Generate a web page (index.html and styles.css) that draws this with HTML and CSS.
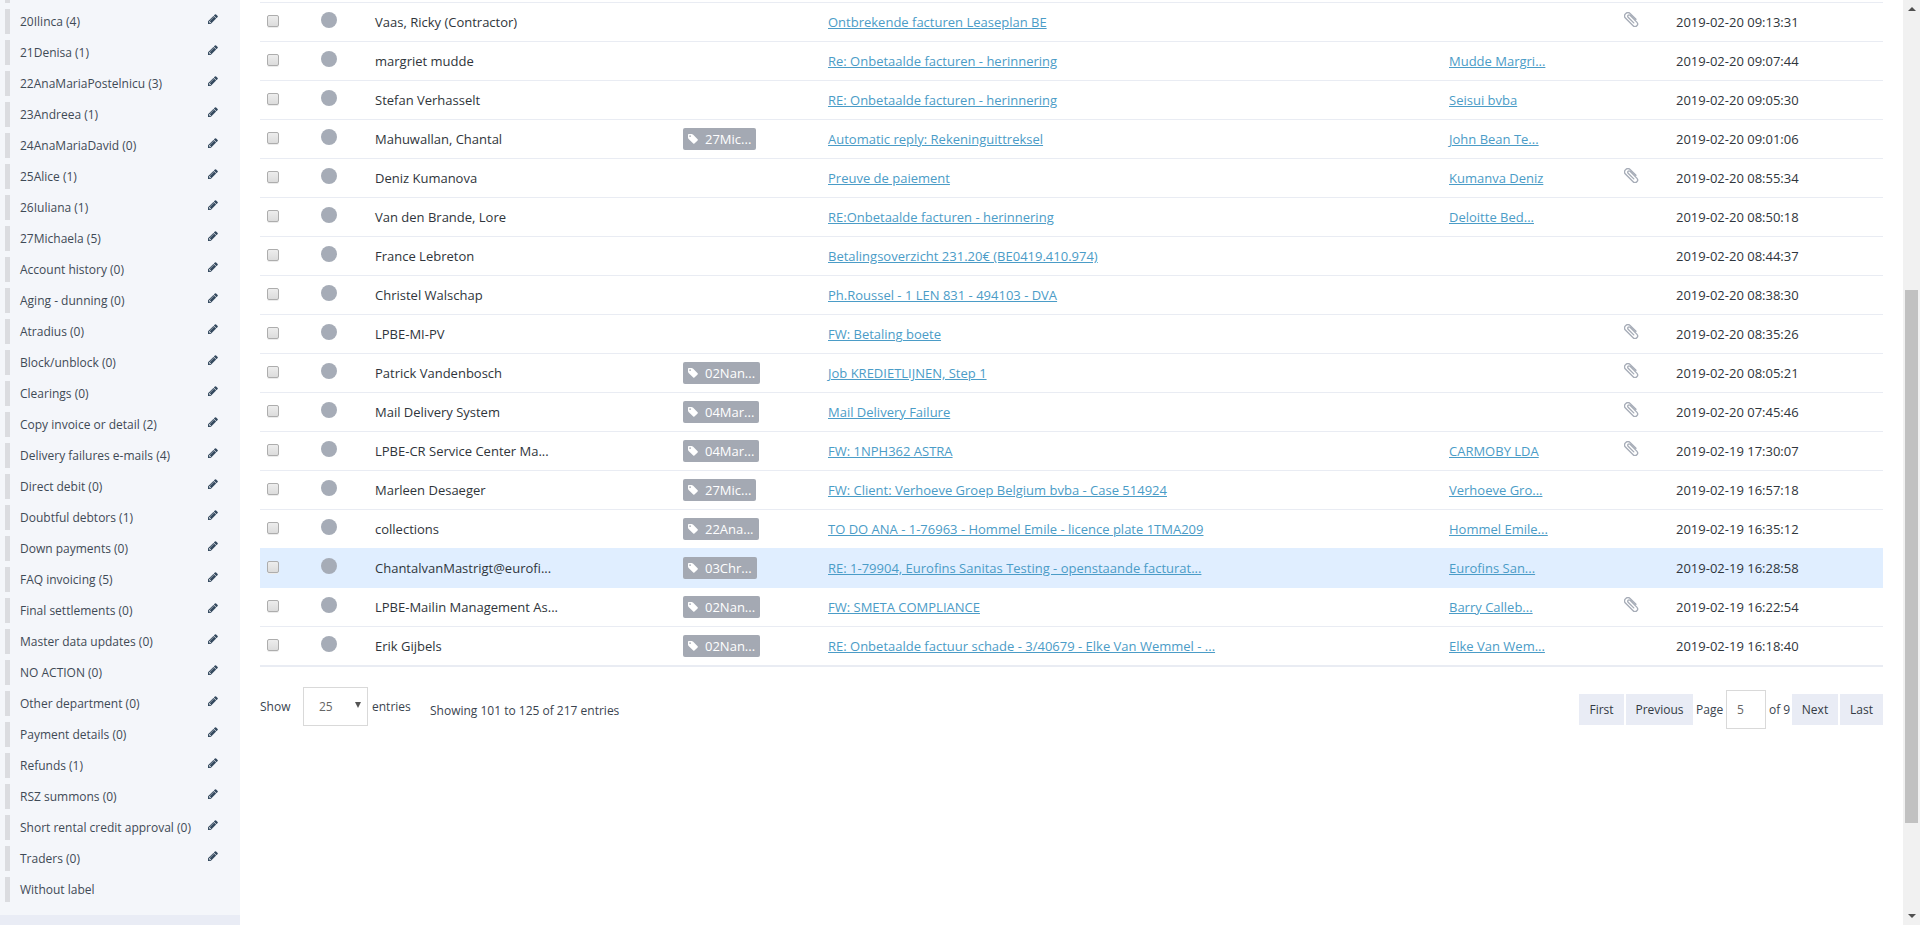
FILE: index.html
```
<!DOCTYPE html>
<html lang="en">
<head>
<meta charset="utf-8">
<title>Mailbox</title>
<link rel="stylesheet" href="styles.css">
</head>
<body>
<svg class="defs" aria-hidden="true">
  <symbol id="pencil" viewBox="0 0 1536 1536"><path d="M363 1408l91-91-235-235-91 91v107h128v128h107zM886 480q0-22-22-22-10 0-17 7l-542 542q-7 7-7 17 0 22 22 22 10 0 17-7l542-542q7-7 7-17zM832 288l416 416-832 832H0v-416zM1515 384q0 53-37 90l-166 166-416-416 166-165q36-38 90-38 53 0 91 38l235 234q37 39 37 91z"/></symbol>
  <symbol id="tag" viewBox="0 0 1536 1536"><path d="M448 320q0-53-37.500-90.500T320 192t-90.500 37.500T192 320t37.500 90.500T320 448t90.500-37.500T448 320zM1515 896q0 53-37 90l-491 492q-39 37-91 37-53 0-90-37L91 762q-38-37-64.500-101T0 544V128q0-52 38-90T128 0h416q53 0 117 26.500T763 91l715 714q37 39 37 91z"/></symbol>
  <symbol id="clip" viewBox="0 0 15 15"><path transform="translate(7.500 7.500) rotate(-45)" fill="none" stroke="currentColor" stroke-width="1.350" stroke-linecap="round" d="M3.300 3V-5A3.300 3.300 0 0 0-3.300-5V5.600A2.600 2.600 0 0 0 1.900 5.600V-4A1.350 1.350 0 0 0-.8-4V4"/></symbol>
</svg>
<div class="app">
  <aside class="sidebar">
    <ul class="labels" id="labels"></ul>
    <div class="sidebar-footer"></div>
  </aside>
  <main class="main">
    <div class="mails" id="mails"></div>
    <div class="footer">
      <div class="length">
        <span class="show">Show</span>
        <span class="select"><span>25</span><i class="caret"></i></span>
        <span class="entries">entries</span>
        <span class="info">Showing 101 to 125 of 217 entries</span>
      </div>
      <div class="pager">
        <span class="btn first">First</span><span class="btn prev">Previous</span><span class="page">Page</span><span class="input">5</span><span class="of">of 9</span><span class="btn next">Next</span><span class="btn last">Last</span>
      </div>
    </div>
  </main>
  <div class="scrollbar"><i class="up"></i><i class="thumb"></i><i class="down"></i></div>
</div>
<script src="app.js"></script>
</body>
</html>
```
FILE: styles.css
```
* { box-sizing: border-box; }
html, body { height: 100%; }
body { margin: 0; overflow: hidden; background: #fff; color: #2f353b; font: 13px/18px "Open Sans", sans-serif; }
.defs { position: absolute; width: 0; height: 0; }
.app { display: grid; grid-template-columns: 240px 1fr 17px; height: 925px; }

.sidebar { display: flex; flex-direction: column; justify-content: space-between; background: #f4f6fa; overflow: hidden; }
.labels { margin: 0; padding: 0 22px 0 5px; list-style: none; font-size: 12px; }
.label { display: flex; justify-content: space-between; height: 25px; margin-bottom: 6px; padding-left: 10px; border-left: 5px solid #dbdce0; line-height: 25px; color: #3f4a56; white-space: nowrap; }
.label.cut { height: 3px; }
.icon-pencil { flex: none; width: 10px; height: 10px; margin-top: 5px; fill: #34495e; }
.sidebar-footer { height: 10px; background: #e9ecf5; }

.main { padding: 2px 20px 0; }
.mails { border-bottom: 2px solid #e9ecf3; }
.mail { display: grid; grid-template-columns: 54px 54px 308px 145px 621px 175px 52px 1fr; align-items: start; height: 39px; padding-left: 7px; border-top: 1px solid #e9ecf3; }
.mail > span { padding-top: 10px; white-space: nowrap; }
.mail.hover, .mail.hover + .mail { border-color: #e0eeff; }
.mail.hover { background: #e0eeff; }
.mail .check { width: 12px; height: 12px; margin-top: 12px; padding: 0; border: 1px solid #adadad; border-radius: 2px; background: linear-gradient(#ededed, #dcdcdc); box-shadow: 0 1px 0 #ececec; }
.dot { width: 16px; height: 16px; margin-top: 9px; border-radius: 50%; background: #a6acb7; }
.mail .tagcell { padding-top: 8px; }
.tag { display: flex; align-items: center; width: fit-content; height: 22px; padding: 0 5px; border-radius: 2px; background: #a4a9b3; color: #fff; }
.icon-tag { width: 10px; height: 10px; margin-right: 7px; fill: #fff; }
a { color: #4b9cc7; text-decoration: underline; }
.mail .file { padding-top: 9px; color: #a6acb7; }
.icon-clip { display: block; width: 15px; height: 15px; }

.footer { display: flex; justify-content: space-between; padding-top: 20px; font-size: 12px; color: #3a444f; }
.length { display: flex; align-items: flex-start; }
.show { width: 43px; padding-top: 11px; }
.select { display: flex; justify-content: space-between; width: 65px; height: 39px; padding: 10px 6px 0 15px; border: 1px solid #d9d9d9; color: #666; }
.caret { height: 0; margin-top: 4px; border: 3px solid transparent; border-top: 6px solid #555; border-bottom: 0; }
.entries { margin-left: 4px; padding-top: 11px; width: 58px; }
.info { padding-top: 15px; }
.pager { display: flex; align-items: center; height: 39px; margin-top: 3px; }
.btn { height: 31px; line-height: 31px; background: #e9ecf5; text-align: center; color: #333a44; }
.first { width: 45px; margin-right: 2px; }
.prev { width: 67px; }
.page { width: 33px; padding-left: 3px; }
.input { width: 40px; height: 39px; padding: 10px; border: 1px solid #d9d9d9; color: #666; }
.of { width: 26px; padding-left: 3px; white-space: nowrap; }
.next { width: 46px; margin-right: 2px; }
.last { width: 43px; }

.scrollbar { display: flex; flex-direction: column; align-items: center; background: #f1f1f1; padding: 7px 0; }
.up, .down { border: 4px solid transparent; height: 0; }
.up { border-bottom-color: #505050; border-top: 0; }
.down { border-top-color: #505050; border-bottom: 0; margin-top: auto; }
.thumb { width: 13px; height: 533px; margin-top: 279px; background: #c1c1c1; }
```
FILE: app.js
```
const labels = ["20Ilinca (4)", "21Denisa (1)", "22AnaMariaPostelnicu (3)", "23Andreea (1)", "24AnaMariaDavid (0)", "25Alice (1)", "26Iuliana (1)", "27Michaela (5)", "Account history (0)", "Aging - dunning (0)", "Atradius (0)", "Block/unblock (0)", "Clearings (0)", "Copy invoice or detail (2)", "Delivery failures e-mails (4)", "Direct debit (0)", "Doubtful debtors (1)", "Down payments (0)", "FAQ invoicing (5)", "Final settlements (0)", "Master data updates (0)", "NO ACTION (0)", "Other department (0)", "Payment details (0)", "Refunds (1)", "RSZ summons (0)", "Short rental credit approval (0)", "Traders (0)", "Without label"];

// sender, label, subject, customer, has attachment, date
const mails = [
  ["Vaas, Ricky (Contractor)", "", "Ontbrekende facturen Leaseplan BE", "", 1, "2019-02-20 09:13:31"],
  ["margriet mudde", "", "Re: Onbetaalde facturen - herinnering", "Mudde Margri...", 0, "2019-02-20 09:07:44"],
  ["Stefan Verhasselt", "", "RE: Onbetaalde facturen - herinnering", "Seisui bvba", 0, "2019-02-20 09:05:30"],
  ["Mahuwallan, Chantal", "27Mic...", "Automatic reply: Rekeninguittreksel", "John Bean Te...", 0, "2019-02-20 09:01:06"],
  ["Deniz Kumanova", "", "Preuve de paiement", "Kumanva Deniz", 1, "2019-02-20 08:55:34"],
  ["Van den Brande, Lore", "", "RE:Onbetaalde facturen - herinnering", "Deloitte Bed...", 0, "2019-02-20 08:50:18"],
  ["France Lebreton", "", "Betalingsoverzicht 231.20€ (BE0419.410.974)", "", 0, "2019-02-20 08:44:37"],
  ["Christel Walschap", "", "Ph.Roussel - 1 LEN 831 - 494103 - DVA", "", 0, "2019-02-20 08:38:30"],
  ["LPBE-MI-PV", "", "FW: Betaling boete", "", 1, "2019-02-20 08:35:26"],
  ["Patrick Vandenbosch", "02Nan...", "Job KREDIETLIJNEN, Step 1", "", 1, "2019-02-20 08:05:21"],
  ["Mail Delivery System", "04Mar...", "Mail Delivery Failure", "", 1, "2019-02-20 07:45:46"],
  ["LPBE-CR Service Center Ma...", "04Mar...", "FW: 1NPH362 ASTRA", "CARMOBY LDA", 1, "2019-02-19 17:30:07"],
  ["Marleen Desaeger", "27Mic...", "FW: Client: Verhoeve Groep Belgium bvba - Case 514924", "Verhoeve Gro...", 0, "2019-02-19 16:57:18"],
  ["collections", "22Ana...", "TO DO ANA - 1-76963 - Hommel Emile - licence plate 1TMA209", "Hommel Emile...", 0, "2019-02-19 16:35:12"],
  ["ChantalvanMastrigt@eurofi...", "03Chr...", "RE: 1-79904, Eurofins Sanitas Testing - openstaande facturat...", "Eurofins San...", 0, "2019-02-19 16:28:58"],
  ["LPBE-Mailin Management As...", "02Nan...", "FW: SMETA COMPLIANCE", "Barry Calleb...", 1, "2019-02-19 16:22:54"],
  ["Erik Gijbels", "02Nan...", "RE: Onbetaalde factuur schade - 3/40679 - Elke Van Wemmel - ...", "Elke Van Wem...", 0, "2019-02-19 16:18:40"]
];
const hovered = 14;

const icon = id => `<svg class="icon-${id}"><use href="#${id}"/></svg>`;
const link = text => text ? `<a>${text}</a>` : "";

document.getElementById("labels").innerHTML = '<li class="label cut"></li>' + labels.map((text, i) =>
  `<li class="label">${text}${i < labels.length - 1 ? icon("pencil") : ""}</li>`).join("");

document.getElementById("mails").innerHTML = mails.map(([from, label, subject, customer, file, date], i) =>
  `<div class="mail${i === hovered ? " hover" : ""}">
    <span class="check"></span><i class="dot"></i><span>${from}</span>
    <span class="tagcell">${label ? `<span class="tag">${icon("tag")}${label}</span>` : ""}</span>
    <span>${link(subject)}</span><span>${link(customer)}</span>
    <span class="file">${file ? icon("clip") : ""}</span><span>${date}</span>
  </div>`).join("");
```
